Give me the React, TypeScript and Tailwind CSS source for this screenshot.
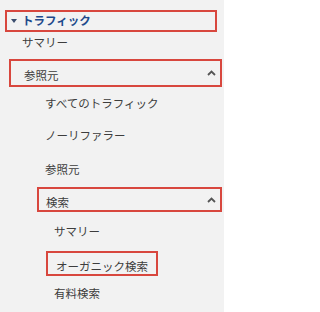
import React from "react";

// ============================================
// Analytics sidebar (traffic section)
// ============================================

type Item = {
  label: string;
  indent: string;
  height: string;
  boxed?: string;
  chevron?: boolean;
  topGap?: string;
};

const ITEMS: Item[] = [
  { label: "サマリー", indent: "pl-[22px]", height: "h-[22px]" },
  {
    label: "参照元",
    indent: "pl-[13px]",
    height: "h-[28px]",
    boxed: "ml-[9px] mr-[2px]",
    chevron: true,
    topGap: "mt-[5px]",
  },
  { label: "すべてのトラフィック", indent: "pl-[45px]", height: "h-[33px]" },
  { label: "ノーリファラー", indent: "pl-[45px]", height: "h-[32px]" },
  { label: "参照元", indent: "pl-[45px]", height: "h-[35px]" },
  {
    label: "検索",
    indent: "pl-[7px]",
    height: "h-[25px]",
    boxed: "ml-[37px] mr-[2px]",
    chevron: true,
  },
  { label: "サマリー", indent: "pl-[54px]", height: "h-[39px]" },
  {
    label: "オーガニック検索",
    indent: "pl-[8px]",
    height: "h-[25px]",
    boxed: "ml-[46px] w-[112px]",
  },
  { label: "有料検索", indent: "pl-[54px]", height: "h-[36px]" },
];

function ChevronUp() {
  return (
    <svg width="9" height="6" viewBox="0 0 9 6" className="shrink-0">
      <path d="M1 5 L4.5 1.5 L8 5" fill="none" stroke="#555" strokeWidth="1.8" />
    </svg>
  );
}

function NavRow({ item }: { item: Item }) {
  const text = <span className="text-[11.5px] leading-none text-[#3d3d3d]">{item.label}</span>;

  if (item.boxed) {
    return (
      <div
        className={`${item.boxed} ${item.topGap ?? ""} ${item.height} ${item.indent} flex items-center border-2 border-[#d8473e] pr-[4px]`}
      >
        <div className="flex-1">{text}</div>
        {item.chevron && <ChevronUp />}
      </div>
    );
  }

  return <div className={`${item.height} ${item.indent} flex items-center`}>{text}</div>;
}

export default function App() {
  return (
    <div
      className="w-[224px] h-[312px] overflow-hidden bg-[#f2f2f2] pt-[10px]"
      style={{ fontFamily: '"Noto Sans CJK JP", "Noto Sans", sans-serif' }}
    >
      {/* Section header */}
      <div className="ml-[5px] w-[212px] h-[22px] flex items-center border-2 border-[#d8473e] pl-[4px] gap-[5px]">
        <svg width="6" height="4" viewBox="0 0 6 4" className="shrink-0">
          <path d="M0 0 H6 L3 4 Z" fill="#3b4d6e" />
        </svg>
        <span className="text-[11.5px] leading-none font-bold text-[#1e4a8c]">トラフィック</span>
      </div>

      {ITEMS.map((item, i) => (
        <NavRow key={i} item={item} />
      ))}
    </div>
  );
}
